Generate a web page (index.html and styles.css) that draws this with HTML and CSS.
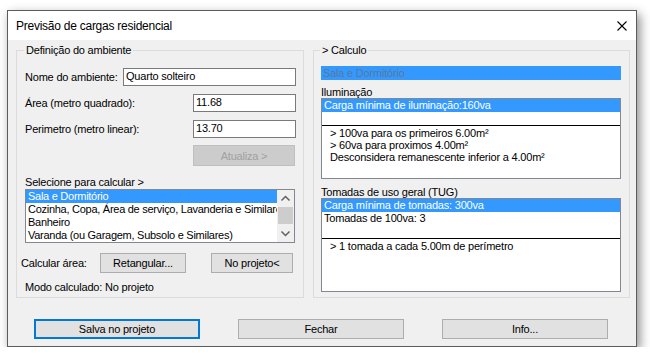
FILE: index.html
```html
<!DOCTYPE html>
<html lang="pt">
<head>
<meta charset="utf-8">
<title>Previsão de cargas residencial</title>
<link rel="stylesheet" href="styles.css">
</head>
<body>
<div class="window">
  <div class="titlebar">
    <span class="title">Previsão de cargas residencial</span>
    <svg class="close" width="10" height="10" viewBox="0 0 10 10"><path d="M0.5 0.5 L9.5 9.5 M9.5 0.5 L0.5 9.5" stroke="#000" stroke-width="1.1" fill="none"/></svg>
  </div>
  <div class="content">
    <div class="groups">
      <fieldset class="group left">
        <legend>Definição do ambiente</legend>
        <div class="field first"><span class="lbl">Nome do ambiente:</span><div class="tb wide">Quarto solteiro</div></div>
        <div class="field"><span class="lbl">Área (metro quadrado):</span><div class="tb narrow">11.68</div></div>
        <div class="field"><span class="lbl">Perimetro (metro linear):</span><div class="tb narrow">13.70</div></div>
        <div class="btnrow"><div class="btn disabled">Atualiza &gt;</div></div>
        <div class="caption">Selecione para calcular &gt;</div>
        <div class="listbox">
          <div class="items">
            <div class="item sel">Sala e Dormitório</div>
            <div class="item">Cozinha, Copa, Área de serviço, Lavanderia e Similares</div>
            <div class="item">Banheiro</div>
            <div class="item">Varanda (ou Garagem, Subsolo e Similares)</div>
          </div>
          <div class="vscroll">
            <div class="arrow"><svg width="17" height="17" viewBox="0 0 17 17"><path d="M4.5 10.5 L8.5 6.5 L12.5 10.5" stroke="#606060" stroke-width="1.5" fill="none"/></svg></div>
            <div class="track"><div class="thumb"></div></div>
            <div class="arrow"><svg width="17" height="17" viewBox="0 0 17 17"><path d="M4.5 6.5 L8.5 10.5 L12.5 6.5" stroke="#606060" stroke-width="1.5" fill="none"/></svg></div>
          </div>
        </div>
        <div class="calcrow">
          <span class="calclbl">Calcular área:</span>
          <div class="btn ret">Retangular...</div>
          <div class="btn np">No projeto&lt;</div>
        </div>
        <div class="mode">Modo calculado: No projeto</div>
      </fieldset>
      <fieldset class="group right">
        <legend>&gt; Calculo</legend>
        <div class="selbar">Sala e Dormitório</div>
        <div class="sublabel">Iluminação</div>
        <div class="box box1">
          <div class="listpart">
            <div class="row sel">Carga mínima de iluminação:160va</div>
          </div>
          <div class="notes">
            <div>&gt; 100va para os primeiros 6.00m²</div>
            <div>&gt; 60va para proximos 4.00m²</div>
            <div>Desconsidera remanescente inferior a 4.00m²</div>
          </div>
        </div>
        <div class="sublabel second">Tomadas de uso geral (TUG)</div>
        <div class="box box2">
          <div class="listpart">
            <div class="row sel">Carga mínima de tomadas: 300va</div>
            <div class="row">Tomadas de 100va: 3</div>
          </div>
          <div class="notes">
            <div>&gt; 1 tomada a cada 5.00m de perímetro</div>
          </div>
        </div>
      </fieldset>
    </div>
    <div class="footer">
      <div class="btn big default">Salva no projeto</div>
      <div class="btn big">Fechar</div>
      <div class="btn big">Info...</div>
    </div>
  </div>
</div>
</body>
</html>
```
FILE: styles.css
```css
* { box-sizing: border-box; }
body {
  margin: 0;
  background: #fff;
  font-family: "Liberation Sans", Arial, sans-serif;
  font-size: 11px;
  letter-spacing: -0.2px;
  color: #000;
}
.window {
  margin: 10px 0 0 7px;
  width: 630px;
  height: 337px;
  border: 1px solid #5c5c5c;
  background: #f0f0f0;
  box-shadow: 3px 4px 10px rgba(0,0,0,0.45);
  display: flex;
  flex-direction: column;
}
.titlebar {
  flex: none;
  height: 29px;
  background: #fff;
  display: flex;
  align-items: center;
  justify-content: space-between;
  padding: 0 9px 0 8px;
}
.title { font-size: 12px; letter-spacing: -0.25px; }
.close { display: block; }
.content {
  flex: 1;
  padding: 4px 6px 0 8px;
}
.groups { display: flex; gap: 9px; }
.group {
  margin: 0;
  min-width: 0;
  height: 254px;
  border: 1px solid #dcdcdc;
}
.group legend {
  padding: 0 2px;
  margin-left: -1px;
  line-height: 13px;
}
.group.left { width: 288px; padding: 0 7px 0 8px; }
.group.right { width: 317px; padding: 0 8px 0 7px; }

.field {
  display: flex;
  align-items: center;
  height: 18px;
  margin-top: 8px;
}
.field.first { margin-top: 11px; }
.lbl { flex: 1; white-space: nowrap; }
.tb {
  height: 18px;
  border: 1px solid #7a7a7a;
  background: #fff;
  padding: 0 2px;
  line-height: 15px;
}
.tb.wide { width: 173px; }
.tb.narrow { width: 103px; }

.btn {
  display: flex;
  align-items: center;
  justify-content: center;
  border: 1px solid #adadad;
  background: #e1e1e1;
  white-space: nowrap;
}
.btnrow { display: flex; justify-content: flex-end; margin-top: 7px; }
.btn.disabled {
  width: 102px;
  height: 21px;
  margin-right: 1px;
  background: #cccccc;
  border-color: #bfbfbf;
  color: #a0a0a0;
}
.caption { margin-top: 10px; line-height: 13px; }
.listbox {
  height: 54px;
  margin-right: 1px;
  border: 1px solid #828790;
  background: #fff;
  display: flex;
}
.items { flex: 1; min-width: 0; overflow: hidden; white-space: nowrap; letter-spacing: -0.27px; }
.item { height: 13px; line-height: 13px; padding-left: 2px; }
.item.sel, .row.sel { background: #3399ff; color: #fff; }
.vscroll {
  width: 17px;
  background: #f0f0f0;
  display: flex;
  flex-direction: column;
}
.arrow { height: 17px; }
.arrow svg { display: block; }
.track { flex: 1; padding: 0 1px; }
.thumb { height: 17px; background: #cdcdcd; }

.calcrow {
  display: flex;
  align-items: center;
  height: 20px;
  margin-top: 10px;
  margin-left: -4px;
}
.calclbl { width: 79px; white-space: nowrap; }
.btn.ret { width: 86px; height: 20px; }
.btn.np { width: 82px; height: 20px; margin-left: 25px; }
.mode { margin-top: 8px; line-height: 13px; }

.selbar {
  margin-top: 9px;
  height: 14px;
  line-height: 14px;
  padding-left: 2px;
  background: #3399ff;
  color: #5d7896;
}
.sublabel { margin-top: 6px; line-height: 12px; }
.sublabel.second { margin-top: 7px; }
.box {
  border: 1px solid #828790;
  background: #fff;
}
.box1 { height: 81px; }
.box2 { height: 94px; }
.listpart { border-bottom: 1px solid #000; }
.box1 .listpart { height: 27px; }
.box2 .listpart { height: 40px; }
.row { height: 13px; line-height: 13px; padding-left: 2px; white-space: nowrap; }
.notes { padding: 1px 0 0 8px; line-height: 12px; }

.footer {
  display: flex;
  gap: 38px;
  margin-top: 21px;
  padding-left: 18px;
}
.btn.big { width: 166px; height: 20px; }
.btn.default { border: 2px solid #0078d7; }
```
